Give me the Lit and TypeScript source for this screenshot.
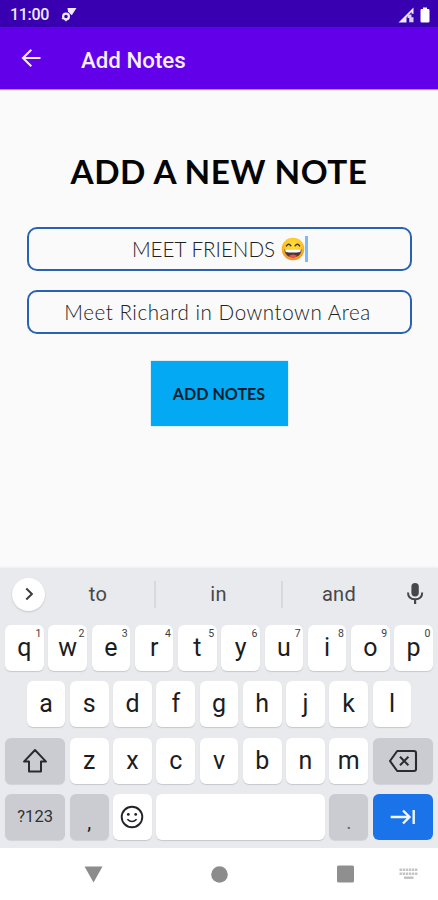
import { LitElement, html, css, svg, nothing } from "lit";
import { customElement, property } from "lit/decorators.js";
import { classMap } from "lit/directives/class-map.js";

@customElement("key-cap")
class KeyCap extends LitElement {
  @property() label = "";
  @property() hint = "";

  static styles = css`
    :host {
      position: relative;
      box-sizing: border-box;
      display: flex;
      align-items: center;
      justify-content: center;
      flex: 0 0 38.7px;
      height: 46px;
      border-radius: 6px;
      background: #fff;
      box-shadow: 0 1px 1px #c6c8cd;
      color: #1c1d20;
      font: 25px/30px Roboto, sans-serif;
    }
    :host(.wide) { flex: 0 0 60.3px; }
    :host(.grey) { background: #cbccd2; box-shadow: 0 1px 1px #d0d2d7; }
    :host(.blue) { background: #1a73e8; box-shadow: none; color: #fff; }
    :host(.space) { flex: 1; }
    :host(.mode) { font-size: 16.5px; font-weight: 400; letter-spacing: 0.1px; color: #303136; }
    :host(.low) { font-size: 20px; padding-top: 11px; }
    :host(.dim) { color: #6b6c70; }
    .hint {
      position: absolute;
      top: 3px;
      right: 2.5px;
      font: 10.5px/11px Roboto, sans-serif;
      color: #3c3d42;
    }
  `;

  render() {
    return html`${this.label}<slot></slot>${this.hint ? html`<span class="hint">${this.hint}</span>` : nothing}`;
  }
}

const icon = (w: number, h: number, body: unknown) =>
  html`<svg width=${w} height=${h} viewBox="0 0 ${w} ${h}" fill="none">${body}</svg>`;

const grin = icon(24, 24, svg`
  <defs>
    <radialGradient id="face" cx=".5" cy=".35" r=".65">
      <stop offset="0" stop-color="#ffe23a"/><stop offset=".6" stop-color="#fcc62b"/><stop offset="1" stop-color="#ee8d25"/>
    </radialGradient>
  </defs>
  <circle cx="12" cy="12" r="11.3" fill="url(#face)"/>
  <path d="M5.4 8.9Q7.7 5.8 9.8 8.8M14.2 8.8Q16.5 5.8 18.6 8.9" stroke="#4b342a" stroke-width="1.5" stroke-linecap="round"/>
  <path d="M3.4 12.2H20.6C20.4 17.4 17 20.4 12 20.4S3.6 17.4 3.4 12.2Z" fill="#4f3530"/>
  <path d="M4 12.3H20L19.3 14.9Q12 16.2 4.7 14.9Z" fill="#fff"/>
  <path d="M7.6 18.9Q12 15.9 16.4 18.9Q12 21.6 7.6 18.9Z" fill="#ee4f55"/>`);

@customElement("app-root")
class AppRoot extends LitElement {
  static styles = css`
    :host {
      display: flex;
      flex-direction: column;
      width: 438px;
      height: 900px;
      overflow: hidden;
      background: #fafafa;
      font-family: Roboto, sans-serif;
    }
    svg { display: block; flex: none; }
    .status {
      box-sizing: border-box;
      display: flex;
      align-items: center;
      height: 27px;
      padding: 2px 8px 0 10px;
      background: #3800b0;
      color: #eee9fb;
      font-size: 16px;
      font-weight: 500;
      line-height: 20px;
    }
    .status .time { width: 51px; letter-spacing: -0.3px; }
    .grow { flex: 1; }
    .status .signal { margin-right: 6px; }
    .bar {
      box-sizing: border-box;
      display: flex;
      align-items: center;
      height: 62px;
      padding: 0 0 0 21px;
      background: #6200ea;
      box-shadow: 0 1px 1px #a994cf;
      color: #f4effd;
    }
    .bar h1 { margin: 3px 0 0 40px; font-size: 22.3px; font-weight: 500; line-height: 28px; }
    .content {
      flex: 1;
      display: flex;
      flex-direction: column;
      align-items: center;
      color: #050505;
      font-family: Lato, sans-serif;
      white-space: nowrap;
    }
    .content h2 { margin: 62px 0 0; font-size: 33.3px; font-weight: 700; line-height: 40px; letter-spacing: 0.55px; }
    .field {
      box-sizing: border-box;
      display: flex;
      align-items: center;
      justify-content: center;
      width: 385px;
      height: 44px;
      border: 2px solid #2862b0;
      border-radius: 10px;
      color: #202020;
      font-size: 20.6px;
      font-weight: 300;
    }
    .field.first { margin-top: 36px; padding-left: 2px; }
    .field.second { margin-top: 19px; letter-spacing: 0.55px; padding-right: 3px; padding-bottom: 1px; }
    .field.first span:first-child { padding-bottom: 1px; }
    .field svg { margin-left: 6px; }
    .caret { width: 3px; height: 26px; background: #7db9f8; }
    .submit {
      display: flex;
      align-items: center;
      justify-content: center;
      width: 137px;
      height: 65px;
      margin-top: 27px;
      background: #04a9f4;
      box-shadow: 0 0 1px #58b8e6;
      color: #06202e;
      font-size: 16.1px;
      font-weight: 700;
    }
    .keyboard {
      box-sizing: border-box;
      display: flex;
      flex-direction: column;
      height: 280px;
      padding: 0 5px;
      background: #e8eaed;
      box-shadow: 0 -1px 2px #eceef0;
    }
    .suggest {
      display: flex;
      align-items: center;
      height: 52px;
      margin-bottom: 5px;
      color: #46474c;
      font-size: 20px;
      letter-spacing: 0.3px;
    }
    .more {
      display: flex;
      align-items: center;
      justify-content: center;
      width: 33px;
      height: 33px;
      margin-left: 7px;
      border-radius: 50%;
      background: #fff;
      box-shadow: 0 1px 2px #c5c7cc;
    }
    .word { width: 125px; text-align: center; }
    .word.start { width: 109px; box-sizing: border-box; padding-right: 3px; }
    .rule { width: 2px; height: 27px; background: #d7d9dd; }
    .word.end { width: 112px; margin-right: 11px; }
    .rows { display: flex; flex-direction: column; gap: 10.3px; }
    .row { display: flex; justify-content: center; gap: 4.55px; }
    .nav { display: flex; align-items: center; height: 52px; background: #fff; }
    .nav .back { margin-left: 84px; }
    .nav .home { margin-left: 108px; }
    .nav .recent { margin-left: 109px; }
    .nav .ime { margin-left: 45px; }
  `;

  private letters(keys: string, numbered = false) {
    return [...keys].map((k, i) => html`<key-cap label=${k} hint=${numbered ? String((i + 1) % 10) : ""}></key-cap>`);
  }

  private field(name: string, body: unknown) {
    return html`<div class=${classMap({ field: true, [name]: true })}>${body}</div>`;
  }

  render() {
    return html`
      <div class="status">
        <span class="time">11:00</span>
        ${icon(16, 16, svg`<circle cx="5" cy="9.5" r="2.9" stroke="#eee9fb" stroke-width="2.2"/><path d="M6.5 1H15.5L10.8 8.3 9.3 7 7 4.4Z" fill="#eee9fb"/><path d="M5 12.5V14.3M1 11.8L2.2 11" stroke="#eee9fb" stroke-width="1.5"/>`)}
        <span class="grow"></span>
        <span class="signal">${icon(16, 16, svg`<path d="M15.5 .5V7L13.6 6.4V5L8.5 10.2V15.5H.5Z" fill="#eee9fb"/><path d="M9.5 7.5H13.5V10.2H15.5V15.2H11.2V11H9.5Z" fill="#d8cdf5"/>`)}</span>
        ${icon(10, 16, svg`<path d="M3 .5H7V2H8.2Q9.5 2 9.5 3.3V14.2Q9.5 15.5 8.2 15.5H1.8Q.5 15.5 .5 14.2V3.3Q.5 2 1.8 2H3Z" fill="#fff"/>`)}
      </div>
      <div class="bar">
        ${icon(20, 20, svg`<path d="M19.5 10H2.2M10.3 1.8L2 10L10.3 18.2" stroke="#f0eafc" stroke-width="2.1"/>`)}
        <h1>Add Notes</h1>
      </div>
      <div class="content">
        <h2>ADD A NEW NOTE</h2>
        ${this.field("first", html`<span>MEET FRIENDS</span>${grin}<span class="caret"></span>`)}
        ${this.field("second", html`<span>Meet Richard in Downtown Area</span>`)}
        <div class="submit">ADD NOTES</div>
      </div>
      <div class="keyboard">
        <div class="suggest">
          <span class="more">${icon(14, 14, svg`<path d="M4.3 1.5L9.9 7L4.3 12.5" stroke="#3c3d41" stroke-width="2"/>`)}</span>
          <span class="word start">to</span><span class="rule"></span>
          <span class="word">in</span><span class="rule"></span>
          <span class="word end">and</span>
          ${icon(18, 24, svg`<rect x="5.4" y="1" width="7.4" height="13.5" rx="3.7" fill="#46474c"/><path d="M2 10.5C2 15 5 17.3 9.1 17.3S16.2 15 16.2 10.5" stroke="#46474c" stroke-width="2"/><path d="M9.1 17V22" stroke="#46474c" stroke-width="2.2"/>`)}
        </div>
        <div class="rows">
          <div class="row">${this.letters("qwertyuiop", true)}</div>
          <div class="row">${this.letters("asdfghjkl")}</div>
          <div class="row">
            <key-cap class="wide grey">${icon(28, 28, svg`<path d="M14 3L25 14.6H20V24.6H8V14.6H3Z" stroke="#2a2b2f" stroke-width="2" stroke-linejoin="round"/>`)}</key-cap>
            ${this.letters("zxcvbnm")}
            <key-cap class="wide grey">${icon(30, 24, svg`<path d="M9.2 2H26Q28 2 28 4V20Q28 22 26 22H9.2L2 12Z" stroke="#2a2b2f" stroke-width="2.1" stroke-linejoin="round"/><path d="M12 7.7L20.4 16.3M20.4 7.7L12 16.3" stroke="#2a2b2f" stroke-width="2"/>`)}</key-cap>
          </div>
          <div class="row">
            <key-cap class="wide grey mode" label="?123"></key-cap>
            <key-cap class="grey low" label=","></key-cap>
            <key-cap>${icon(24, 24, svg`<circle cx="12" cy="12" r="10.3" stroke="#222327" stroke-width="1.9"/><circle cx="8.3" cy="9.4" r="1.4" fill="#222327"/><circle cx="15.7" cy="9.4" r="1.4" fill="#222327"/><path d="M7.4 14.2Q12 18.8 16.6 14.2" stroke="#222327" stroke-width="1.6"/>`)}</key-cap>
            <key-cap class="space"></key-cap>
            <key-cap class="grey low dim" label="."></key-cap>
            <key-cap class="wide blue">${icon(26, 18, svg`<path d="M.7 9H19M13 2.5L19.5 9L13 15.5M23.7 2V16" stroke="#f2f7fe" stroke-width="2.4"/>`)}</key-cap>
          </div>
        </div>
      </div>
      <div class="nav">
        <span class="back">${icon(19, 17, svg`<path d="M.5 .5H18.5L9.5 16.5Z" fill="#8c8c8c"/>`)}</span>
        <span class="home">${icon(17, 17, svg`<circle cx="8.5" cy="8.5" r="8.3" fill="#8c8c8c"/>`)}</span>
        <span class="recent">${icon(17, 18, svg`<rect x="0" y=".5" width="17" height="17" rx="1.5" fill="#8f8f8f"/>`)}</span>
        <span class="ime">${icon(19, 12, svg`<path d="M.5 1.8H18.5M.5 5.8H18.5" stroke="#c4c4c4" stroke-width="2.4" stroke-dasharray="2.4 .7"/><path d="M5 9.7H14.5" stroke="#c0c0c0" stroke-width="2.4"/>`)}</span>
      </div>`;
  }
}
